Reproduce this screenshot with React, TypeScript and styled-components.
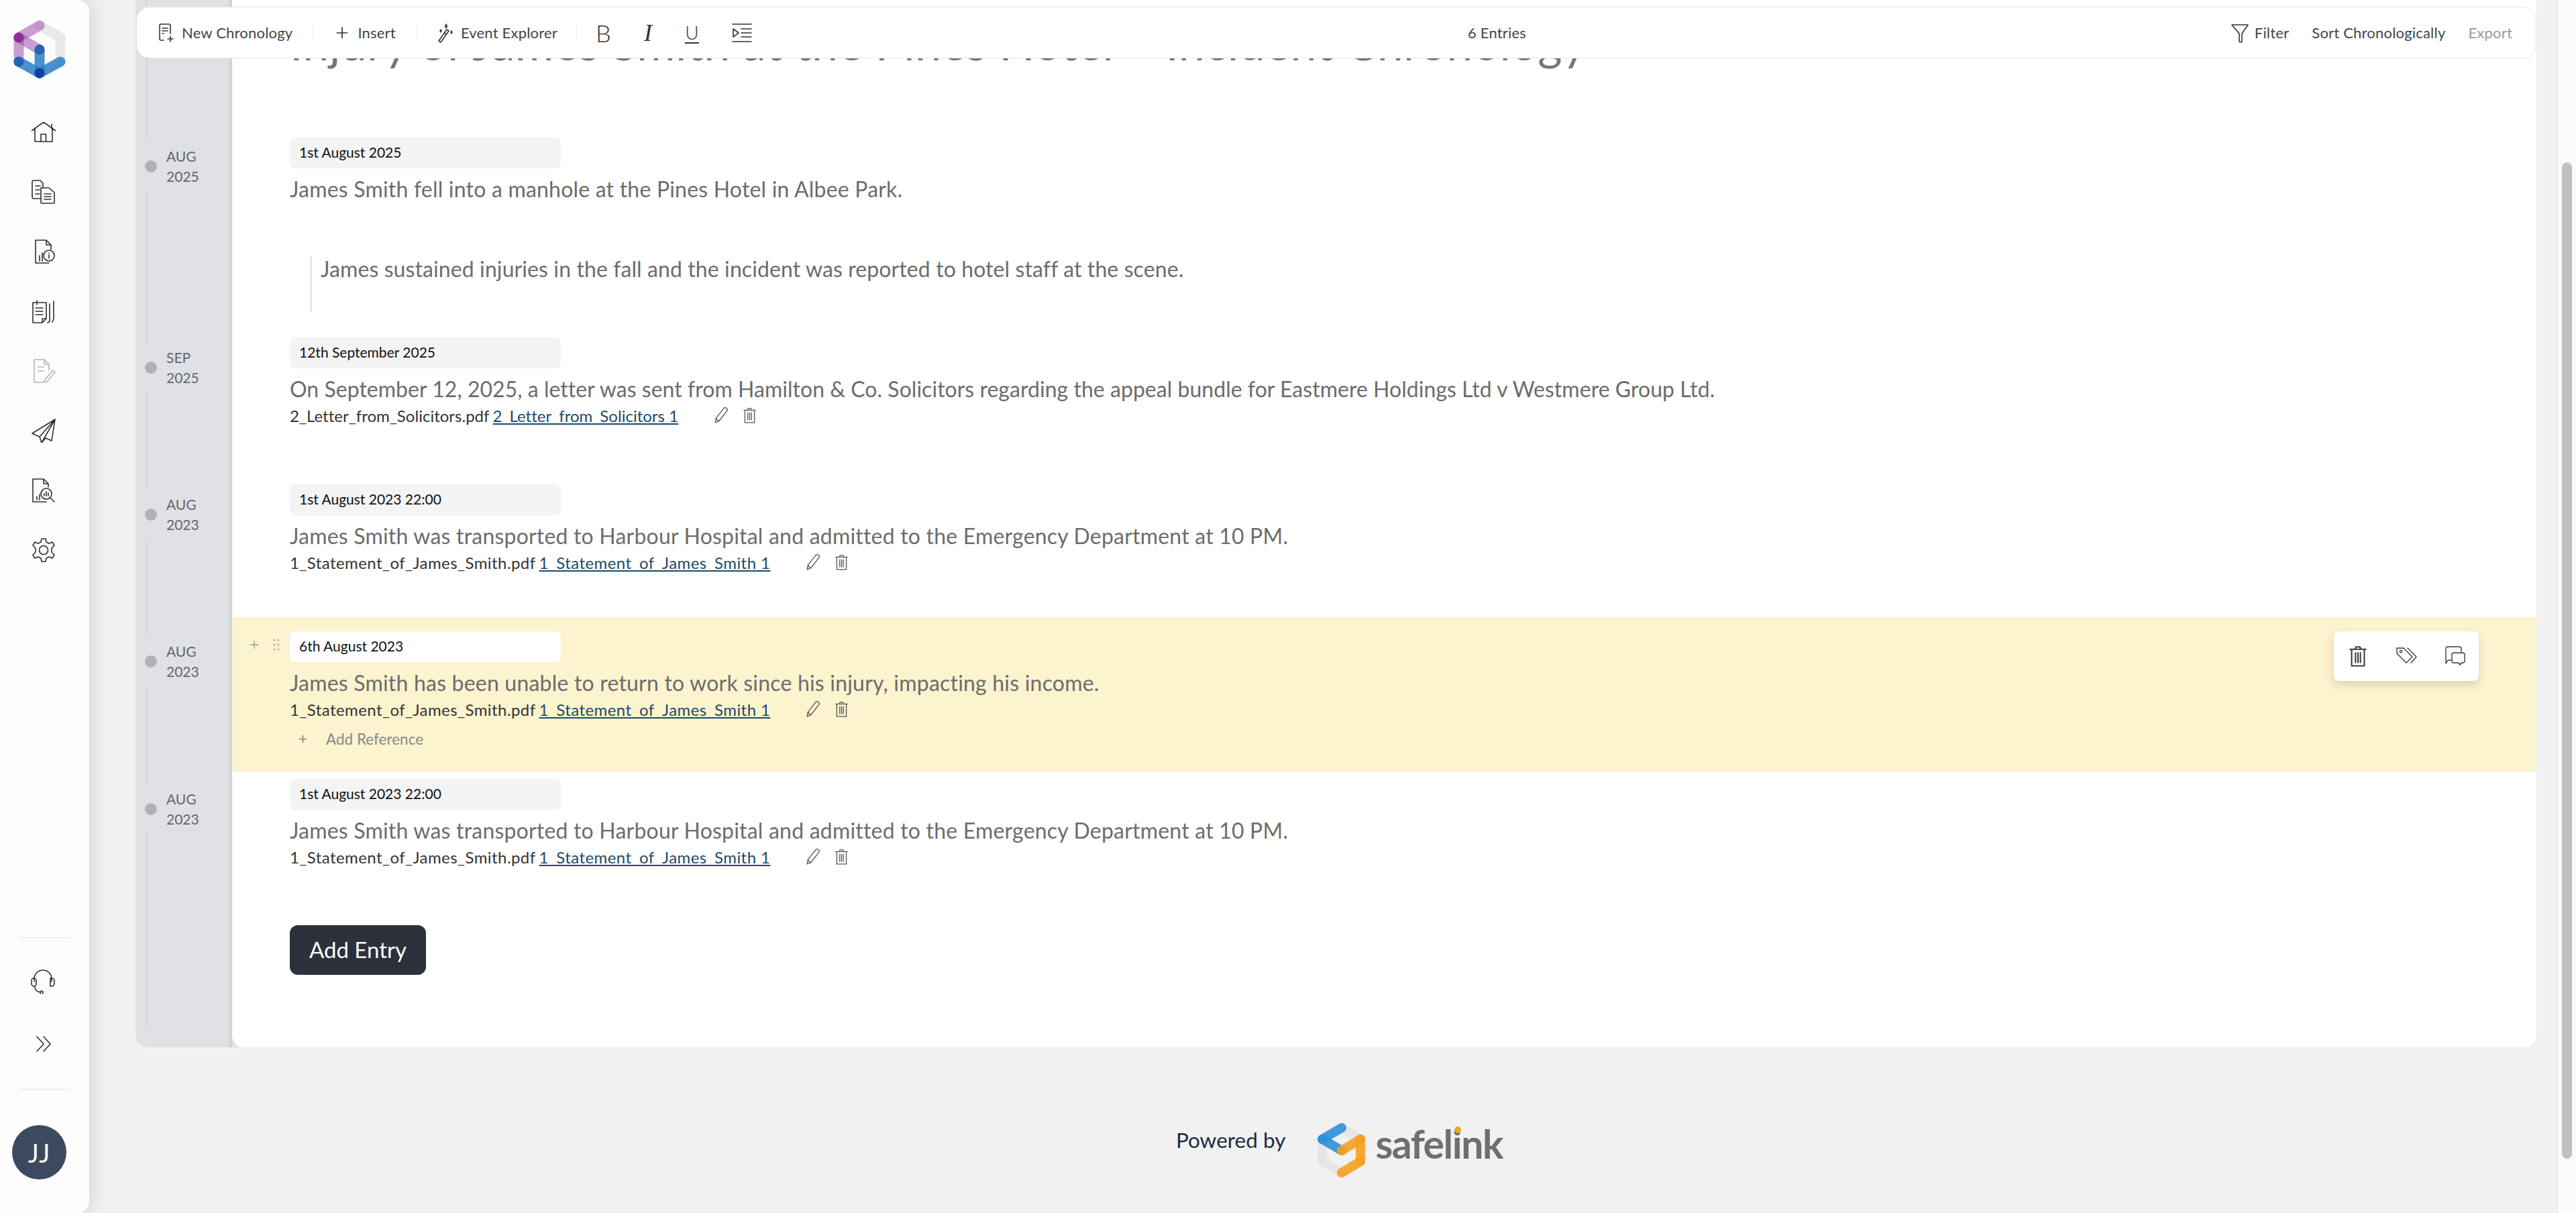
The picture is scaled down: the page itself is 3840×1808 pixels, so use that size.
import React, { FC } from 'react';
import styled, { createGlobalStyle } from 'styled-components';
import { Plus } from 'lucide-react';

const FONT = '"Lato", "Open Sans", sans-serif';

const GlobalStyle = createGlobalStyle`
  html, body { margin: 0; padding: 0; background: #f1f1f1; }
  body { font-family: ${ FONT }; overflow: hidden; }
  * { box-sizing: border-box; }
`;

const Page = styled.div`
  display: flex;
  width: 3840px;
  height: 1808px;
  overflow: hidden;
`;

const Sidebar = styled.aside`
  position: relative;
  z-index: 5;
  flex: 0 0 133px;
  display: flex;
  flex-direction: column;
  background: #fdfdfd;
  border-radius: 0 18px 18px 0;
  box-shadow: 0 0 36px rgba(0, 0, 0, 0.14);
  padding-top: 30px;
`;

const Logo = styled.svg`
  width: 80px;
  height: 88px;
  margin-left: 19px;
  display: block;
`;

const NavList = styled.nav`
  display: flex;
  flex-direction: column;
  gap: 53px;
  margin: 64px 0 0 47px;
`;

const NavIcon = styled.svg<{ $muted?: boolean; $short?: boolean }>`
  width: 36px;
  height: ${ p => p.$short ? 33 : 36 }px;
  display: block;
  fill: none;
  stroke: ${ p => p.$muted ? '#b4b4b4' : '#2c2f36' };
  stroke-width: 1.6;
  stroke-linecap: round;
  stroke-linejoin: round;
`;

const SideBottom = styled.div`
  margin-top: auto;
  display: flex;
  flex-direction: column;
  padding-bottom: 50px;
`;

const SideRule = styled.div<{ $top?: number }>`
  height: 1px;
  width: 75px;
  margin: ${ p => p.$top ?? 0 }px 0 0 29px;
  background: #e4e4e4;
`;

const SideAction = styled.div<{ $top: number }>`
  margin: ${ p => p.$top }px 0 0 46px;
`;

const Avatar = styled.div`
  width: 81px;
  height: 81px;
  margin: 53px 0 0 18px;
  border-radius: 50%;
  background: #3b4a5f;
  color: #fff;
  font-size: 38px;
  letter-spacing: 1px;
  display: flex;
  align-items: center;
  justify-content: center;
`;

const Main = styled.main`
  position: relative;
  flex: 1;
  display: flex;
  flex-direction: column;
  padding: 0 31px 0 69px;
`;

const Toolbar = styled.div`
  position: absolute;
  z-index: 3;
  top: 10px;
  left: 70px;
  right: 31px;
  height: 77px;
  display: flex;
  align-items: center;
  background: #fff;
  border: 1.5px solid #e6e6e6;
  border-radius: 20px;
  padding: 0 35px 0 31px;
  color: #444;
  font-size: 22px;
  letter-spacing: 0.2px;
`;

const ToolGroup = styled.div`
  display: flex;
  align-items: center;
  gap: 10px;
  white-space: nowrap;
`;

const ToolDivider = styled.div<{ $space?: number }>`
  width: 1px;
  height: 26px;
  background: #ececec;
  margin: 0 ${ p => p.$space ?? 30 }px;
`;

const ToolIcon = styled.svg<{ $wide?: boolean }>`
  width: ${ p => p.$wide ? 30 : 26 }px;
  height: 30px;
  fill: none;
  stroke: #333;
  stroke-width: 1.6;
  stroke-linecap: round;
  stroke-linejoin: round;
  display: block;
`;

const FormatGroup = styled.div`
  display: flex;
  align-items: center;
  gap: 49px;
  color: #333;
  font-size: 36px;
  font-weight: 300;
  line-height: 1;
`;

const ItalicMark = styled.span`
  font-family: "Liberation Serif", serif;
  font-style: italic;
`;

const UnderlineMark = styled.span`
  font-size: 28px;
  line-height: 30px;
  border-bottom: 2.5px solid #333;
`;

const EntryCount = styled.div`
  position: absolute;
  left: 1984px;
  width: 81px;
  text-align: center;
  white-space: nowrap;
`;

const ToolRight = styled.div`
  margin-left: auto;
  display: flex;
  align-items: center;
`;

const ToolText = styled.span<{ $disabled?: boolean; $gap?: number }>`
  color: ${ p => p.$disabled ? '#999' : '#444' };
  margin-left: ${ p => p.$gap ?? 0 }px;
  white-space: nowrap;
`;

const Card = styled.section`
  display: flex;
  flex-direction: column;
  background: #e0e1e6;
  border-radius: 0 0 18px 18px;
  overflow: hidden;
`;

const Row = styled.div<{ $height: number }>`
  display: flex;
  min-height: ${ p => p.$height }px;
`;

const Rail = styled.div`
  flex: 0 0 144px;
  display: flex;
  flex-direction: column;
  background: linear-gradient(to right, transparent 137px, #cfd0d5 144px);
`;

const Dash = styled.div<{ $height?: number; $end?: number }>`
  ${ p => p.$height ? `height: ${ p.$height }px;` : 'flex: 1;' }
  ${ p => p.$end ? `margin-bottom: ${ p.$end }px;` : '' }
  width: 0;
  margin-left: 16px;
  border-left: 1px dashed #b3b5ba;
`;

const Marker = styled.div`
  height: 77px;
  display: flex;
  align-items: center;
  padding-left: 14px;
  gap: 14px;
`;

const Dot = styled.div`
  width: 18px;
  height: 18px;
  border-radius: 50%;
  background: #aeb1b8;
`;

const MarkerLabel = styled.div`
  font-size: 21px;
  line-height: 30px;
  color: #666;
`;

const Body = styled.div<{ $highlight?: boolean; $top: number; $roundCorner?: boolean }>`
  position: relative;
  flex: 1;
  background: ${ p => p.$highlight ? '#fcf3cf' : '#fff' };
  padding: ${ p => p.$top }px 40px 0 86px;
  ${ p => p.$roundCorner && 'border-bottom-left-radius: 18px;' }
`;

const Title = styled.h1`
  margin: 0;
  font-size: 70px;
  line-height: 80px;
  font-weight: 400;
  letter-spacing: 0.25px;
  color: #777;
  white-space: nowrap;
`;

const DateField = styled.div<{ $highlight?: boolean }>`
  position: relative;
  width: 404px;
  height: 46px;
  padding: 0 14px 3px;
  display: flex;
  align-items: center;
  border-radius: 8px;
  background: ${ p => p.$highlight ? '#fff' : '#f4f4f4' };
  color: #111;
  font-size: 21px;
`;

const Handles = styled.div`
  position: absolute;
  left: -62px;
  top: 11px;
  display: flex;
  align-items: center;
  gap: 19px;
  color: #aaa;
`;

const DragDots = styled.svg`
  width: 10px;
  height: 18px;
  fill: #b4b4a8;
`;

const EntryText = styled.p<{ $tracking?: number }>`
  margin: 11px 0 2px;
  font-size: 32px;
  line-height: 40px;
  letter-spacing: ${ p => p.$tracking ?? 0.2 }px;
  color: #6c6c6c;
  white-space: nowrap;
`;

const Quote = styled.blockquote`
  margin: 80px 0 0 30px;
  height: 83px;
  border-left: 3px solid #e8e8e8;
  padding-left: 13px;
  font-size: 32px;
  line-height: 38px;
  letter-spacing: 0.1px;
  color: #6c6c6c;
  white-space: nowrap;
`;

const RefLine = styled.div<{ $tracking: number }>`
  margin-top: 4px;
  height: 30px;
  display: flex;
  align-items: center;
  font-size: 24px;
  letter-spacing: ${ p => p.$tracking }px;
  color: #333;
  white-space: nowrap;
`;

const RefLink = styled.a`
  margin-left: 5px;
  color: #1d4a6b;
  text-decoration: underline;
`;

const RefIcons = styled.div`
  margin-left: 54px;
  display: flex;
  align-items: center;
  gap: 21px;
`;

const SmallIcon = styled.svg`
  width: 21px;
  height: 24px;
  fill: none;
  stroke: #555;
  stroke-width: 1.2;
  stroke-linecap: round;
  stroke-linejoin: round;
  display: block;
`;

const AddReference = styled.div`
  margin: 14px 0 0 11px;
  height: 30px;
  display: flex;
  align-items: center;
  gap: 26px;
  color: #888;
  font-size: 22.5px;
`;

const ActionCard = styled.div`
  position: absolute;
  top: 21px;
  right: 86px;
  width: 216px;
  height: 74px;
  display: flex;
  align-items: center;
  justify-content: space-between;
  padding: 0 20px;
  background: #fff;
  border-radius: 8px;
  box-shadow: 0 6px 14px rgba(80, 70, 30, 0.18);
`;

const ActionIcon = styled.svg`
  width: 32px;
  height: 32px;
  fill: none;
  stroke: #3a3a3a;
  stroke-width: 1.4;
  stroke-linecap: round;
  stroke-linejoin: round;
  display: block;
`;

const AddEntryButton = styled.button`
  width: 203px;
  height: 74px;
  border: 0;
  border-radius: 12px;
  padding: 0 0 3px;
  background: #2c313c;
  color: #fff;
  font-family: ${ FONT };
  font-size: 33px;
`;

const Footer = styled.footer`
  flex: 1;
  display: flex;
  align-items: flex-start;
  justify-content: center;
  padding: 110px 0 0 10px;
`;

const PoweredBy = styled.span`
  font-size: 31.5px;
  line-height: 56px;
  color: #1a2b42;
`;

const SafelinkLogo = styled.svg`
  width: 84px;
  height: 92px;
  margin: 0 6px 0 44px;
  display: block;
`;

const Wordmark = styled.span`
  font-size: 59px;
  line-height: 74px;
  font-weight: 700;
  color: #6f6f6f;
  letter-spacing: -1.5px;
  margin-top: -3px;
`;

const OrangeDotted = styled.span`
  position: relative;

  &::after {
    content: '';
    position: absolute;
    left: 3px;
    top: 10px;
    width: 10px;
    height: 10px;
    border-radius: 50%;
    background: #f5a623;
  }
`;

const ScrollTrack = styled.div`
  flex: 0 0 28px;
  padding: 242px 6px 0 6px;
  background: #fafafa;
  border-left: 1px solid #e6e6e6;
`;

const ScrollThumb = styled.div`
  height: 1485px;
  border-radius: 8px;
  background: #c1c1c1;
`;

const TrashIcon: FC = () => (
  <path d="M4 5h16M9 5l1-2.5h4L15 5M5.5 5v17h13V5M9.5 8.5v10M12 8.5v10M14.5 8.5v10" />
);

const RefActions: FC = () => (
  <RefIcons>
    <SmallIcon viewBox="4 2 19 22">
      <path d="M6 17 17 3c1-1 3 0 4 1s1 2 0 3L10 21l-5 2 1-6ZM6 17c1 2 2 3 4 4" />
    </SmallIcon>
    <SmallIcon viewBox="3 1 18 22"><TrashIcon /></SmallIcon>
  </RefIcons>
);

interface EntryRailProps {
  month: string;
  year: string;
  top?: number;
}

const EntryRail: FC<EntryRailProps> = ({ month, year, top = 27 }) => (
  <Rail>
    <Dash $height={ top } />
    <Marker>
      <Dot />
      <MarkerLabel>{ month }<br />{ year }</MarkerLabel>
    </Marker>
    <Dash />
  </Rail>
);

const Reference: FC<{ file: string; link: string; tracking: number }> = ({ file, link, tracking }) => (
  <RefLine $tracking={ tracking }>
    { file }
    <RefLink>{ link }</RefLink>
    <RefActions />
  </RefLine>
);

const StatementReference: FC = () => (
  <Reference file="1_Statement_of_James_Smith.pdf" link="1_Statement_of_James_Smith 1" tracking={ 0.43 } />
);

const App: FC = () => (
  <Page>
    <GlobalStyle />
    <Sidebar>
      <Logo viewBox="20 30 78 88">
        <g fill="none" strokeWidth="15" strokeLinecap="round">
          <path d="M59 38 90 56M90 56V92" stroke="#e4e4e4" opacity=".8" />
          <path d="M59 38 28 56" stroke="#a14fa8" opacity=".55" />
          <path d="M28 56V92" stroke="#a14fa8" opacity=".55" />
          <path d="M28 56 59 74" stroke="#a14fa8" opacity=".55" />
          <path d="M28 92 59 109" stroke="#2a7fc4" opacity=".85" />
          <path d="M59 109 90 92" stroke="#2a7fc4" opacity=".85" />
          <path d="M59 74V109" stroke="#2a7fc4" opacity=".85" />
        </g>
        <circle cx="28" cy="56" r="7.5" fill="#8a2f96" />
        <circle cx="28" cy="92" r="7.5" fill="#2b5fb8" />
        <circle cx="59" cy="74" r="7.5" fill="#2b5fb8" />
        <circle cx="59" cy="109" r="7.5" fill="#123f9c" />
      </Logo>
      <NavList>
        <NavIcon viewBox="0 0 36 33" $short>
          <path d="M0 13 18 0l18 13M5 9v20h26V9M14 29V18h7.5v11M30 3v7" />
        </NavIcon>
        <NavIcon viewBox="0 0 36 36">
          <path d="M14 28H3a2 2 0 0 1-2-2V3a2 2 0 0 1 2-2h10l4 4v7" />
          <path d="M14 12h12l8 7v15a1 1 0 0 1-1 1H15a1 1 0 0 1-1-1V12ZM6 9h7M6 15h6M6 21h6M19 21h10M19 25h10M19 29h10" />
        </NavIcon>
        <NavIcon viewBox="0 0 36 36">
          <path d="M6 35V1h16l7 7v7M22 1v7h7M6 35h20M12 32v-8M16 32V20" />
          <circle cx="26" cy="24" r="8" />
          <path d="M26 23v5M26 20v.5" />
        </NavIcon>
        <NavIcon viewBox="0 0 36 36">
          <path d="M2 5h20v24l-6 6H2V5ZM16 35v-6h6M8 2v6M6 13h11M6 18h11M6 23h11M27 7v26l-3 2M33 3v26l-2 5" />
        </NavIcon>
        <NavIcon viewBox="0 0 36 36" $muted>
          <path d="M26 17V8l-7-7H4v34h12M19 1v7h7M20 31l12-14 3 3-12 14-5 1 2-4ZM10 12h8M10 18h8" />
        </NavIcon>
        <NavIcon viewBox="0 0 36 36">
          <path d="M35 1 1 22l11 5 3 9 6-7 9 4 5-32ZM35 1 12 27M35 1 15 36" />
        </NavIcon>
        <NavIcon viewBox="0 0 36 36">
          <path d="M2 35V1h16l7 7v5M18 1v7h7M2 35h20M8 32v-5M12 32v-8" />
          <circle cx="22" cy="23" r="8" />
          <path d="M28 29l6 6M19 26v-3M22 26v-6M25 26v-4" />
        </NavIcon>
        <NavIcon viewBox="0 0 36 36">
          <circle cx="18" cy="18" r="6.5" />
          <path d="M15 1h6l1 5 4 2 5-2 3 5-4 4v6l4 4-3 5-5-2-4 2-1 5h-6l-1-5-4-2-5 2-3-5 4-4v-6L2 11l3-5 5 2 4-2 1-5Z" />
        </NavIcon>
      </NavList>
      <SideBottom>
        <SideRule />
        <SideAction $top={ 47 }>
          <NavIcon viewBox="0 0 36 36">
            <path d="M5 18V14a13 13 0 0 1 26 0v4M6 26c0 4 3 7 8 8" />
            <rect x="1" y="13" width="7" height="12" rx="3.5" />
            <path d="M29 13h2a4 4 0 0 1 4 4v4a4 4 0 0 1-4 4h-2V13Z" />
            <circle cx="16" cy="34" r="2" />
          </NavIcon>
        </SideAction>
        <SideAction $top={ 57 }>
          <NavIcon viewBox="0 0 36 36">
            <path d="m9 7 10 11L9 29M19 7l10 11-10 11" />
          </NavIcon>
        </SideAction>
        <SideRule $top={ 49 } />
        <Avatar>JJ</Avatar>
      </SideBottom>
    </Sidebar>

    <Main>
      <Toolbar>
        <ToolGroup>
          <ToolIcon viewBox="0 0 26 30">
            <path d="M9 26H5a2 2 0 0 1-2-2V4a2 2 0 0 1 2-2h12a2 2 0 0 1 2 2v12M7 8h8M7 12h8M7 16h2M19 20v8M15 24h8" />
          </ToolIcon>
          New Chronology
        </ToolGroup>
        <ToolDivider />
        <ToolGroup>
          <Plus size={ 26 } strokeWidth={ 1.6 } color="#333" />
          Insert
        </ToolGroup>
        <ToolDivider />
        <ToolGroup>
          <ToolIcon viewBox="0 0 26 30">
            <path d="M3 27 15 10l3 2L6 29l-3-2ZM11 15l3 2M14 2l1.5 3L14 8l-1.5-3L14 2ZM22 12l1 2-1 2-1-2 1-2ZM6 10l1 2-1 2-1-2 1-2Z" />
          </ToolIcon>
          Event Explorer
        </ToolGroup>
        <ToolDivider $space={ 28 } />
        <FormatGroup>
          <span>B</span>
          <ItalicMark>I</ItalicMark>
          <UnderlineMark>U</UnderlineMark>
          <ToolIcon viewBox="0 0 30 30" $wide>
            <path d="M1 2h28M1 28h28M2 9v12l8-6-8-6ZM14 9h15M14 15h15M14 21h15" />
          </ToolIcon>
        </FormatGroup>
        <EntryCount>6 Entries</EntryCount>
        <ToolRight>
          <ToolIcon viewBox="0 0 26 30">
            <path d="M1 3h24L16 16v11a2 2 0 0 1-4 0V16L1 3Z" />
          </ToolIcon>
          <ToolText $gap={ 9 }>Filter</ToolText>
          <ToolText $gap={ 34 }>Sort Chronologically</ToolText>
          <ToolText $gap={ 34 } $disabled>Export</ToolText>
        </ToolRight>
      </Toolbar>

      <Card>
        <Row $height={ 184 }>
          <Rail><Dash /></Rail>
          <Body $top={ 23 }>
            <Title>Injury of James Smith at the Pines Hotel – Incident Chronology</Title>
          </Body>
        </Row>

        <Row $height={ 298 }>
          <EntryRail month="AUG" year="2025" top={ 25 } />
          <Body $top={ 21 }>
            <DateField>1st August 2025</DateField>
            <EntryText>James Smith fell into a manhole at the Pines Hotel in Albee Park.</EntryText>
            <Quote>James sustained injuries in the fall and the incident was reported to hotel staff at the scene.</Quote>
          </Body>
        </Row>

        <Row $height={ 219 }>
          <EntryRail month="SEP" year="2025" />
          <Body $top={ 21 }>
            <DateField>12th September 2025</DateField>
            <EntryText $tracking={ 0.03 }>On September 12, 2025, a letter was sent from Hamilton &amp; Co. Solicitors regarding the appeal bundle for Eastmere Holdings Ltd v Westmere Group Ltd.</EntryText>
            <Reference file="2_Letter_from_Solicitors.pdf" link="2_Letter_from_Solicitors 1" tracking={ 0.02 } />
          </Body>
        </Row>

        <Row $height={ 219 }>
          <EntryRail month="AUG" year="2023" />
          <Body $top={ 21 }>
            <DateField>1st August 2023 22:00</DateField>
            <EntryText>James Smith was transported to Harbour Hospital and admitted to the Emergency Department at 10 PM.</EntryText>
            <StatementReference />
          </Body>
        </Row>

        <Row $height={ 230 }>
          <EntryRail month="AUG" year="2023" />
          <Body $top={ 21 } $highlight>
            <DateField $highlight>
              <Handles>
                <Plus size={ 18 } strokeWidth={ 2.4 } />
                <DragDots viewBox="0 0 10 18">
                  <circle cx="2" cy="2" r="1.6" /><circle cx="8" cy="2" r="1.6" />
                  <circle cx="2" cy="9" r="1.6" /><circle cx="8" cy="9" r="1.6" />
                  <circle cx="2" cy="16" r="1.6" /><circle cx="8" cy="16" r="1.6" />
                </DragDots>
              </Handles>
              6th August 2023
            </DateField>
            <EntryText>James Smith has been unable to return to work since his injury, impacting his income.</EntryText>
            <StatementReference />
            <AddReference>
              <Plus size={ 17 } strokeWidth={ 2.4 } />
              Add Reference
            </AddReference>
            <ActionCard>
              <ActionIcon viewBox="3 1 18 22"><TrashIcon /></ActionIcon>
              <ActionIcon viewBox="0 0 32 32">
                <path d="M2 4h10l13 13-9 9L2 12V4ZM18 4l13 13-8 9" />
                <circle cx="8" cy="9" r="1.6" />
              </ActionIcon>
              <ActionIcon viewBox="0 0 32 32">
                <path d="M11 22H6l-3 5V5a3 3 0 0 1 3-3h17a3 3 0 0 1 3 3v6" />
                <path d="M15 11h13a3 3 0 0 1 3 3v9a3 3 0 0 1-3 3h-2l-2 3-2-3h-7a3 3 0 0 1-3-3v-9a3 3 0 0 1 3-3Z" />
              </ActionIcon>
            </ActionCard>
          </Body>
        </Row>

        <Row $height={ 180 }>
          <EntryRail month="AUG" year="2023" top={ 17 } />
          <Body $top={ 11 }>
            <DateField>1st August 2023 22:00</DateField>
            <EntryText>James Smith was transported to Harbour Hospital and admitted to the Emergency Department at 10 PM.</EntryText>
            <StatementReference />
          </Body>
        </Row>

        <Row $height={ 231 }>
          <Rail><Dash $end={ 31 } /></Rail>
          <Body $top={ 49 } $roundCorner>
            <AddEntryButton>Add Entry</AddEntryButton>
          </Body>
        </Row>
      </Card>

      <Footer>
        <PoweredBy>Powered by</PoweredBy>
        <SafelinkLogo viewBox="1960 1668 84 92">
          <g fill="none" strokeWidth="14" strokeLinecap="round" strokeLinejoin="round">
            <path d="M2000 1678 2028 1695M1971 1695V1728L2000 1745" stroke="#e6e6e6" />
            <path d="M2000 1678 1971 1695" stroke="#2f8fd8" opacity=".9" />
            <path d="M1971 1695 2000 1712" stroke="#2f8fd8" opacity=".9" />
            <path d="M2000 1712 2028 1695" stroke="#f5a020" opacity=".9" />
            <path d="M2028 1695V1728" stroke="#f5a020" opacity=".9" />
            <path d="M2028 1728 2000 1745" stroke="#f5a020" opacity=".9" />
          </g>
        </SafelinkLogo>
        <Wordmark>safel<OrangeDotted>i</OrangeDotted>nk</Wordmark>
      </Footer>
    </Main>

    <ScrollTrack><ScrollThumb /></ScrollTrack>
  </Page>
);

export default App;
